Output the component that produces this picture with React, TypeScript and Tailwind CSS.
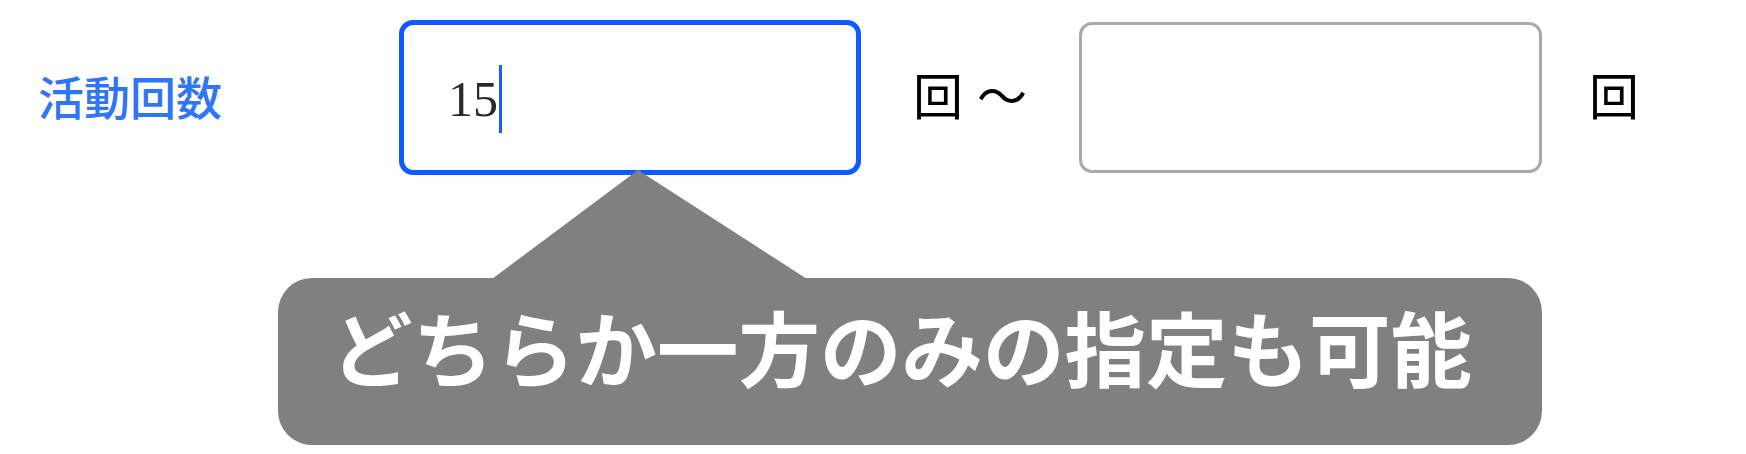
const jp = { fontFamily: '"Noto Sans CJK JP", "Noto Sans", sans-serif' };

const Caret = () => <span className="inline-block w-[3px] h-[68px] bg-[#1a5cf5] ml-[1px]" />;

const ActivityCountFilter = () => {
  return (
    <div className="relative w-[1746px] h-[454px] bg-white overflow-hidden" style={jp}>
      <div className="flex items-center pt-[20px] pl-[38px]">
        <div className="w-[361px] text-[46px] leading-none font-medium text-[#2f76f6] pb-[6px]">活動回数</div>

        <div className="w-[462px] h-[155px] rounded-[14px] border-[5px] border-[#0a5cff] flex items-center pl-[44px] pt-[2px]">
          <span className="text-[50px] leading-none text-[#2a2a2a]" style={{ fontFamily: '"Liberation Serif", serif' }}>
            15
          </span>
          <Caret />
        </div>

        <div className="flex items-center ml-[52px] text-[50px] leading-none text-black pb-[10px]">
          <span>回</span>
          <span className="ml-[14px]">～</span>
        </div>

        <div className="ml-[52px] w-[463px] h-[151px] rounded-[13px] border-[3px] border-[#a9a9a9]" />

        <div className="ml-[47px] text-[50px] leading-none text-black pb-[10px]">回</div>
      </div>

      <div className="relative ml-[278px] mt-[103px] w-[1264px] h-[167px] rounded-[34px] bg-[#808080] pl-[53px] pt-[27px]">
        <svg className="absolute left-[214px] top-[-108px]" width="315" height="109" viewBox="0 0 315 109">
          <polygon points="146,0 0,109 315,109" fill="#808080" />
        </svg>
        <div className="text-[81.5px] leading-none font-semibold text-white whitespace-nowrap">
          どちらか一方のみの指定も可能
        </div>
      </div>
    </div>
  );
};

export default function App() {
  return <ActivityCountFilter />;
}
